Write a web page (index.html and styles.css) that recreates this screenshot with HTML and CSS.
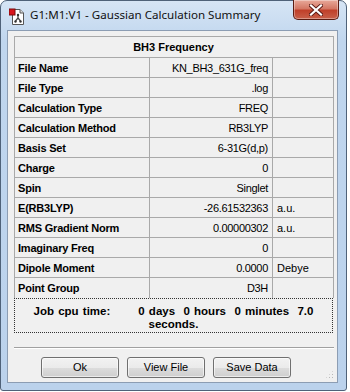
FILE: index.html
```
<!DOCTYPE html>
<html lang="en">
<head>
    <meta charset="UTF-8">
    <title>G1:M1:V1 - Gaussian Calculation Summary</title>
    <link rel="stylesheet" href="styles.css">
</head>
<body>

<div class="window">
    <div class="title-bar">
        <svg class="app-icon" width="16" height="17" viewBox="0 0 16 17">
            <path d="M3.5 1.5 H11 L14.5 5 V16.5 H3.5 Z" fill="#fff" stroke="#555" />
            <path d="M11 1.5 V5 H14.5" fill="#ddd" stroke="#555" />
            <rect x="0" y="1" width="6" height="6" fill="#d8141c" stroke="#7a0a0a" stroke-width="1" />
            <g stroke="#444" stroke-width="1.2" fill="none">
                <path d="M9 7 V10 L6.5 13 M9 10 L11.5 13" />
            </g>
            <circle cx="9" cy="7" r="1.2" fill="#333" />
            <circle cx="6.5" cy="13.5" r="1.2" fill="#333" />
            <circle cx="11.5" cy="13.5" r="1.2" fill="#333" />
        </svg>
        <span class="title-text">G1:M1:V1 - Gaussian Calculation Summary</span>
        <div class="close-btn">
            <svg width="14" height="12" viewBox="0 0 14 12">
                <path d="M2 1.5 L12 10.5 M12 1.5 L2 10.5" stroke="#5a1a14" stroke-width="4" stroke-linecap="square" />
                <path d="M2 1.5 L12 10.5 M12 1.5 L2 10.5" stroke="#fff" stroke-width="2.2" stroke-linecap="square" />
            </svg>
        </div>
    </div>

    <div class="client">
        <table class="summary">
            <colgroup>
                <col class="col-label">
                <col class="col-value">
                <col class="col-unit">
            </colgroup>
            <tr><th colspan="3">BH3 Frequency</th></tr>
            <tr><td class="label">File Name</td><td class="value">KN_BH3_631G_freq</td><td class="unit"></td></tr>
            <tr><td class="label">File Type</td><td class="value">.log</td><td class="unit"></td></tr>
            <tr><td class="label">Calculation Type</td><td class="value">FREQ</td><td class="unit"></td></tr>
            <tr><td class="label">Calculation Method</td><td class="value">RB3LYP</td><td class="unit"></td></tr>
            <tr><td class="label">Basis Set</td><td class="value">6-31G(d,p)</td><td class="unit"></td></tr>
            <tr><td class="label">Charge</td><td class="value">0</td><td class="unit"></td></tr>
            <tr><td class="label">Spin</td><td class="value">Singlet</td><td class="unit"></td></tr>
            <tr><td class="label">E(RB3LYP)</td><td class="value">-26.61532363</td><td class="unit">a.u.</td></tr>
            <tr><td class="label">RMS Gradient Norm</td><td class="value">0.00000302</td><td class="unit">a.u.</td></tr>
            <tr><td class="label">Imaginary Freq</td><td class="value">0</td><td class="unit"></td></tr>
            <tr><td class="label">Dipole Moment</td><td class="value">0.0000</td><td class="unit">Debye</td></tr>
            <tr class="last"><td class="label">Point Group</td><td class="value">D3H</td><td class="unit"></td></tr>
        </table>

        <div class="cpu-box">
            <div class="cpu-line">Job cpu time:<span class="gap"></span>0 days&nbsp;&nbsp;0 hours&nbsp;&nbsp;0 minutes&nbsp;&nbsp;7.0</div>
            <div class="cpu-line">seconds.</div>
        </div>

        <div class="separator"></div>

        <div class="buttons">
            <button class="btn">Ok</button>
            <button class="btn">View File</button>
            <button class="btn">Save Data</button>
        </div>

        <div class="grip"></div>
    </div>
</div>

</body>
</html>
```

FILE: styles.css
```
* {
    margin: 0;
    padding: 0;
    box-sizing: border-box;
}

html, body {
    width: 350px;
    height: 392px;
    overflow: hidden;
    background: #fff;
    font-family: "Liberation Sans", Arial, sans-serif;
}

.window {
    width: 347px;
    height: 391px;
    border: 1px solid #4f6279;
    border-radius: 7px 7px 3px 3px;
    background: linear-gradient(to bottom, #d6e5f5 0, #c0d6ee 40px, #bbd2ec 100%);
    padding: 0 8px 7px 6px;
    display: flex;
    flex-direction: column;
}

.title-bar {
    height: 29px;
    display: flex;
    align-items: flex-start;
    position: relative;
}

.app-icon {
    margin: 7px 0 0 2px;
    flex-shrink: 0;
}

.title-text {
    margin: 6px 0 0 5px;
    font-family: "Noto Sans", "Open Sans", sans-serif;
    font-size: 11.6px;
    color: #111;
}

.close-btn {
    position: absolute;
    top: -1px;
    right: -1px;
    width: 46px;
    height: 20px;
    border: 1px solid #5b1c12;
    border-top: none;
    border-radius: 0 0 5px 5px;
    background: linear-gradient(to bottom, #e8a99a 0, #d47865 45%, #c0402a 55%, #c8604a 100%);
    display: flex;
    justify-content: center;
    align-items: center;
    box-shadow: inset 0 0 0 1px rgba(255, 255, 255, 0.35);
}

.client {
    flex: 1;
    background: #f0f0f0;
    border: 1px solid #8c9db3;
    padding: 5px 4px 0 6px;
    position: relative;
}

.summary {
    width: 319px;
    border-collapse: collapse;
    font-size: 11px;
    color: #000;
    table-layout: fixed;
}

.col-label { width: 135px; }
.col-value { width: 123px; }
.col-unit { width: 61px; }

.summary th,
.summary td {
    border: 1px solid #a9a9a9;
    height: 20px;
    padding: 0 4px 0 3px;
    white-space: nowrap;
    overflow: hidden;
}

.summary th {
    height: 21px;
    text-align: center;
    font-weight: bold;
}

.summary td.label {
    font-weight: bold;
    letter-spacing: -0.2px;
}

.summary td.value {
    text-align: right;
    letter-spacing: -0.3px;
}

.summary td.unit {
    padding-left: 4px;
}

.summary tr.last td {
    border-bottom: none;
}

.cpu-box {
    width: 319px;
    height: 35px;
    border: 1px dotted #333;
    text-align: center;
    font-size: 11.5px;
    font-weight: bold;
    padding-top: 6px;
    line-height: 13px;
}

.cpu-line {
    white-space: nowrap;
    word-spacing: 1px;
}

.cpu-line .gap {
    display: inline-block;
    width: 28px;
}

.separator {
    width: 320px;
    height: 2px;
    margin-top: 14px;
    border-top: 1px solid #a0a0a0;
    border-bottom: 1px solid #fff;
}

.buttons {
    display: flex;
    gap: 8px;
    margin: 8px 0 0 27px;
}

.btn {
    width: 78px;
    height: 21px;
    border: 1px solid #707070;
    border-radius: 3px;
    background: linear-gradient(to bottom, #f2f2f2 0, #ebebeb 50%, #dddddd 51%, #cfcfcf 100%);
    font-family: "Liberation Sans", Arial, sans-serif;
    font-size: 11px;
    color: #000;
    box-shadow: inset 0 0 0 1px rgba(255, 255, 255, 0.6);
}

.grip {
    position: absolute;
    right: 3px;
    bottom: 3px;
    width: 9px;
    height: 9px;
    background: radial-gradient(circle, #b8b8b8 0.8px, transparent 1px) 0 0 / 3px 3px;
    clip-path: polygon(100% 0, 100% 100%, 0 100%);
}
```
